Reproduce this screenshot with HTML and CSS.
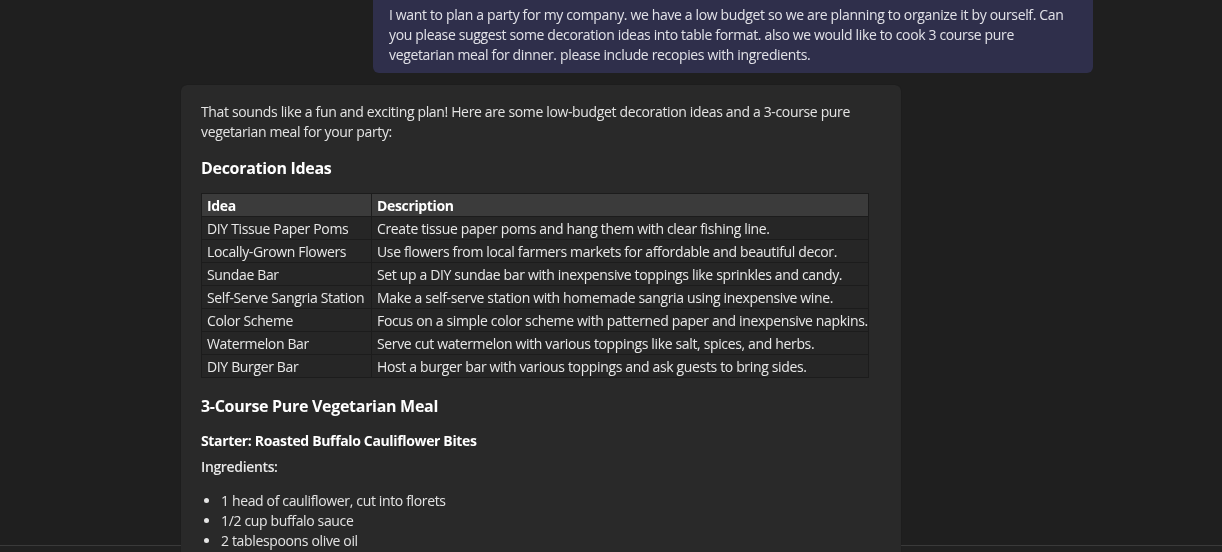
FILE: index.html
```html
<!DOCTYPE html>
<html>
<head>
<meta charset="utf-8">
<link rel="stylesheet" href="styles.css">
</head>
<body>
<div class="chat">
  <div class="row row-user">
    <div class="bubble-user">
      I want to plan a party for my company. we have a low budget so we are planning to organize it by ourself. Can you please suggest some decoration ideas into table format. also we would like to cook 3 course pure vegetarian meal for dinner. please include recopies with ingredients.
    </div>
  </div>
  <div class="row row-bot">
    <div class="bubble-bot">
      <p class="intro">That sounds like a fun and exciting plan! Here are some low-budget decoration ideas and a 3-course pure vegetarian meal for your party:</p>
      <h3 class="h">Decoration Ideas</h3>
      <table class="tbl">
        <colgroup><col class="c1"><col class="c2"></colgroup>
        <thead>
          <tr><th>Idea</th><th>Description</th></tr>
        </thead>
        <tbody>
          <tr><td>DIY Tissue Paper Poms</td><td>Create tissue paper poms and hang them with clear fishing line.</td></tr>
          <tr><td>Locally-Grown Flowers</td><td>Use flowers from local farmers markets for affordable and beautiful decor.</td></tr>
          <tr><td>Sundae Bar</td><td>Set up a DIY sundae bar with inexpensive toppings like sprinkles and candy.</td></tr>
          <tr><td>Self-Serve Sangria Station</td><td>Make a self-serve station with homemade sangria using inexpensive wine.</td></tr>
          <tr><td>Color Scheme</td><td>Focus on a simple color scheme with patterned paper and inexpensive napkins.</td></tr>
          <tr><td>Watermelon Bar</td><td>Serve cut watermelon with various toppings like salt, spices, and herbs.</td></tr>
          <tr><td>DIY Burger Bar</td><td>Host a burger bar with various toppings and ask guests to bring sides.</td></tr>
        </tbody>
      </table>
      <h3 class="h h2">3-Course Pure Vegetarian Meal</h3>
      <p class="sub">Starter: Roasted Buffalo Cauliflower Bites</p>
      <p class="ing">Ingredients:</p>
      <ul class="list">
        <li>1 head of cauliflower, cut into florets</li>
        <li>1/2 cup buffalo sauce</li>
        <li>2 tablespoons olive oil</li>
      </ul>
    </div>
  </div>
</div>
<div class="footer"></div>
</body>
</html>
```

FILE: styles.css
```css
html, body {
  margin: 0;
  padding: 0;
  height: 100%;
  overflow: hidden;
}
body {
  background: #1f1f1f;
  font-family: "Open Sans", "Noto Sans", sans-serif;
  font-size: 14px;
  line-height: 20px;
  color: #e4e4e4;
  letter-spacing: -0.35px;
}
.chat {
  position: relative;
  z-index: 1;
  height: 552px;
  overflow: hidden;
  display: flex;
  flex-direction: column;
  gap: 12px;
}
.row {
  display: flex;
}
.row-user {
  padding-left: 373px;
  margin-top: -10px;
}
.bubble-user {
  width: 688px;
  background: #2f2f4b;
  border-radius: 6px;
  padding: 15px 16px 8px 16px;
  color: #e2e2e8;
}
.row-bot {
  padding-left: 181px;
}
.bubble-bot {
  width: 680px;
  background: #292929;
  border-radius: 6px;
  padding: 17px 20px 40px 20px;
  box-shadow: 0 0 1px rgba(0,0,0,0.4);
}
.intro {
  margin: 0;
}
.h {
  margin: 15px 0 14px 0;
  font-size: 16px;
  line-height: 22px;
  font-weight: 700;
  color: #ffffff;
  letter-spacing: -0.3px;
}
.h2 {
  margin: 17px 0 14px 0;
}
.tbl {
  border-collapse: collapse;
  width: 668px;
  table-layout: fixed;
  border: 1px solid #1c1c1c;
}
.c1 { width: 170px; }
.tbl th, .tbl td {
  border: 1px solid #1c1c1c;
  padding: 0 5px 0 5px;
  height: 22px;
  line-height: 21px;
  text-align: left;
  white-space: nowrap;
  overflow: hidden;
}
.tbl th {
  background: #3b3b3b;
  color: #ffffff;
  font-weight: 700;
}
.tbl td {
  background: #262626;
  color: #e8e8e8;
}
.sub {
  margin: 0;
  font-weight: 700;
  color: #ffffff;
}
.ing {
  margin: 6px 0 0 0;
  font-weight: 600;
  color: #e8e8e8;
}
.list {
  margin: 14px 0 0 0;
  padding-left: 20px;
}
.list li {
  padding-left: 0;
}
.footer {
  position: fixed;
  left: 0;
  right: 0;
  bottom: 0;
  height: 6px;
  border-top: 1px solid #3a3a3a;
  background: #212121;
  z-index: 0;
}
```
